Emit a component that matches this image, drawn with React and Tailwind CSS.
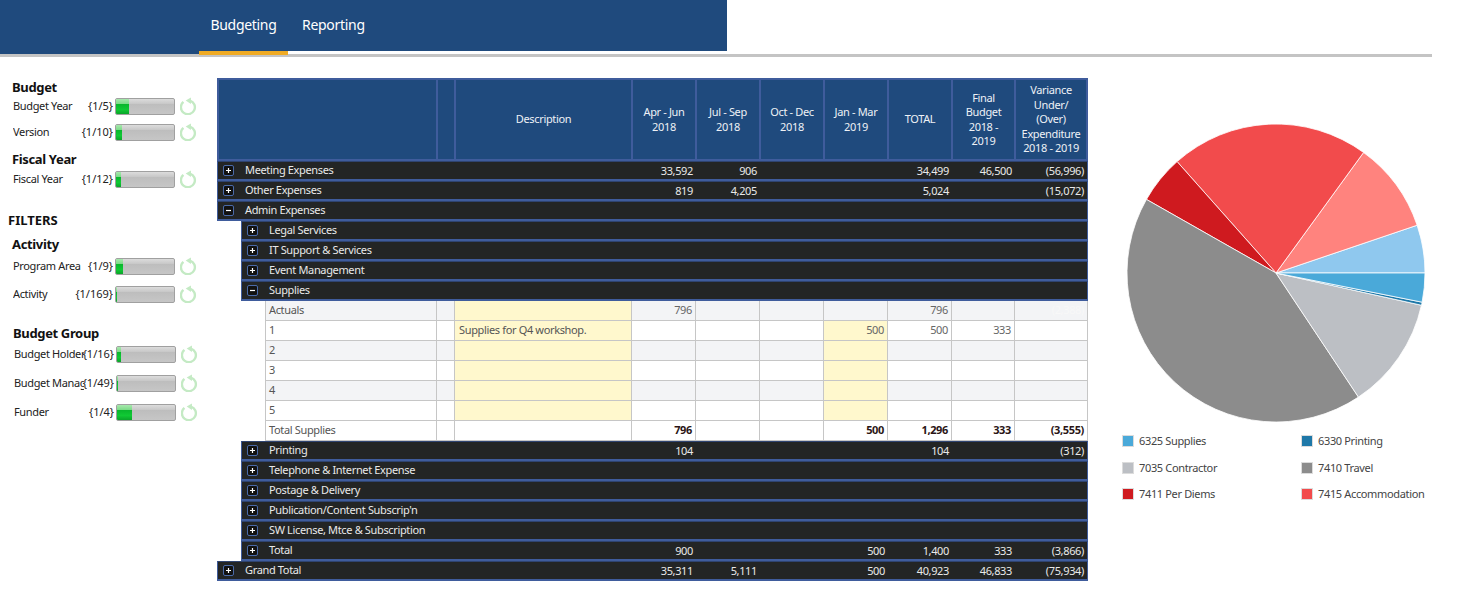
import React from 'react';

const cols = 'grid-cols-[219px_18px_177px_64px_64px_64px_64px_64px_63px_70px]';

function Toggle({ open }) {
  return (
    <span className="w-[11px] h-[11px] shrink-0 rounded-[2px] border border-[#4a6aa8] bg-[#111] flex items-center justify-center">
      <svg width="7" height="7" viewBox="0 0 7 7">
        <path d={open ? 'M1 3.5h5' : 'M1 3.5h5M3.5 1v5'} stroke="#fff" strokeWidth="1.2" fill="none" />
      </svg>
    </span>
  );
}

function Refresh() {
  return (
    <svg width="17" height="18" viewBox="0 0 18 18" className="block shrink-0" fill="none">
      <path d="M3.6 4.6A7.4 7.4 0 1 0 10.5 3.2" stroke="#c4eac4" strokeWidth="2.5" />
      <path d="M6 3.2L11.6 0V6.8Z" fill="#c4eac4" />
    </svg>
  );
}

function Filter({ label, count, fill, indent = 'ml-[13px]', className = '' }) {
  return (
    <div className={`flex items-center h-[19px] ${indent} ${className}`}>
      <span className="w-[70px] shrink-0 overflow-hidden whitespace-nowrap text-[#222]">{label}</span>
      <span className="w-[30px] shrink-0 flex justify-end whitespace-nowrap tracking-normal text-[#222]">{count}</span>
      <div className="relative ml-[2px] w-[60px] h-[17px] shrink-0 rounded-[2px] border border-[#a0a0a0] bg-[linear-gradient(#dcdcdc_0%,#c9c9c9_30%,#bdbdbd_32%,#c6c6c6_100%)] overflow-hidden">
        <div className="h-full bg-[linear-gradient(#a8e8ae_0%,#7fdc8a_30%,#08b52c_32%,#10c934_70%,#0aa52a_100%)]" style={{ width: fill }} />
      </div>
      <span className="ml-[5px] -mt-[2px]"><Refresh /></span>
    </div>
  );
}

function DarkRow({ label, open, vals = [], indent = 0 }) {
  // indent is how far the band starts inside the table
  const first = indent === 1 ? 'ml-[24px]' : '';
  return (
    <div className={`${first} h-5 bg-[#232525] border-l border-r border-b-2 border-t border-[#3f5c9c] border-t-[#2f4470] flex text-[#e9e9e9]`}>
      <div className={`flex items-center gap-[11px] pl-[5px] ${indent === 1 ? 'w-[195px]' : 'w-[219px]'} shrink-0 whitespace-nowrap`}>
        <Toggle open={open} />
        <span>{label}</span>
      </div>
      <div className="w-[195px] shrink-0" />
      {vals.map((v, i) => (
        <div key={i} className={`${i === 6 ? 'w-[72px]' : i === 5 ? 'w-[63px]' : 'w-[64px]'} shrink-0 text-right pr-[3px] leading-[17px] whitespace-nowrap`}>
          {v}
        </div>
      ))}
    </div>
  );
}

const n7 = (q1, q2, q4, total, fin, variance) => [q1, q2, '', q4, total, fin, variance];

function Detail({ label, odd, desc, q1, q4, total, fin, variance, faint, bold, edit = true, q4edit }) {
  const base = odd ? 'bg-[#f3f4f6]' : 'bg-white';
  const line = 'border-r border-b border-[#c6c6c6] h-5 leading-[18px] whitespace-nowrap';
  const num = `${line} ${base} text-right pr-[3px] ${bold ? 'font-bold text-[#2a1515]' : 'text-[#666]'}`;
  return (
    <div className="ml-[48px] flex text-[#555]">
      <div className={`${line} ${base} w-[172px] border-l pl-[3px] shrink-0`}>{label}</div>
      <div className={`${line} ${base} w-[18px] shrink-0`} />
      <div className={`${line} ${edit ? 'bg-[#fff8cd]' : base} w-[177px] pl-[4px] shrink-0`}>{desc}</div>
      <div className={`${num} w-[64px] shrink-0`}>{q1}</div>
      <div className={`${num} w-[64px] shrink-0`} />
      <div className={`${num} w-[64px] shrink-0`} />
      <div className={`${num} ${q4edit ? '!bg-[#fff8cd]' : ''} w-[64px] shrink-0`}>{q4}</div>
      <div className={`${num} w-[64px] shrink-0`}>{total}</div>
      <div className={`${num} w-[63px] shrink-0`}>{fin}</div>
      <div className={`${num} ${faint ? '!text-[#f8f8f8]' : ''} w-[73px] shrink-0`}>{variance}</div>
    </div>
  );
}

function Head({ children }) {
  return (
    <div className="border-r-2 border-[#3f5c9c] last:border-r-0 flex items-center justify-center text-center leading-[14.5px] text-[#eef1f6] px-[5px]">
      {children}
    </div>
  );
}

const slices = [
  { from: 0, to: 18.7, color: '#8fc8ee' },
  { from: 18.7, to: 54, color: '#ff837e' },
  { from: 54, to: 131.6, color: '#f24b4c' },
  { from: 131.6, to: 150.4, color: '#cf1a1f' },
  { from: 150.4, to: 303.6, color: '#8c8c8c' },
  { from: 303.6, to: 347.5, color: '#bcbfc4' },
  { from: 347.5, to: 348.7, color: '#1e78a8' },
  { from: 348.7, to: 360, color: '#4aa9d9' },
];

function slicePath(from, to) {
  const r = 149;
  const rad = (a) => (a * Math.PI) / 180;
  const x1 = 150 + r * Math.cos(rad(from));
  const y1 = 150 - r * Math.sin(rad(from));
  const x2 = 150 + r * Math.cos(rad(to));
  const y2 = 150 - r * Math.sin(rad(to));
  return `M150 150L${x1} ${y1}A${r} ${r} 0 ${to - from > 180 ? 1 : 0} 0 ${x2} ${y2}Z`;
}

const legend = [
  ['#4aa9d9', '6325 Supplies'],
  ['#1e78a8', '6330 Printing'],
  ['#bcbfc4', '7035 Contractor'],
  ['#8c8c8c', '7410 Travel'],
  ['#cf1a1f', '7411 Per Diems'],
  ['#f24b4c', '7415 Accommodation'],
];

export default function App() {
  return (
    <div className="w-[1457px] h-[597px] bg-white overflow-hidden text-[11px] tracking-[-0.35px] font-['Noto_Sans',sans-serif]">
      <header className="w-[1432px] h-[57px] border-b-[3px] border-[#c4c4c4] flex">
        <div className="w-[199px] h-[54px] bg-[#1f4a7d]" />
        <div className="w-[528px]">
          <nav className="h-[51px] bg-[#1f4a7d] flex text-[14px] tracking-[-0.3px] text-white">
            <a className="w-[89px] text-center leading-[49px]">Budgeting</a>
            <a className="ml-[14px] leading-[49px]">Reporting</a>
          </nav>
          <div className="w-[89px] h-[4px] bg-[#f0ab24]" />
        </div>
      </header>

      <div className="flex">
        <aside className="w-[217px] shrink-0 pt-[21px]">
          <h3 className="ml-[12px] text-[13px] font-bold leading-[18px] text-[#111]">Budget</h3>
          <Filter label="Budget Year" count="{1/5}" fill={13} className="mt-[1px]" />
          <Filter label="Version" count="{1/10}" fill={6} className="mt-[7px]" />
          <h3 className="ml-[12px] mt-[8px] text-[13px] font-bold leading-[18px] text-[#111]">Fiscal Year</h3>
          <Filter label="Fiscal Year" count="{1/12}" fill={5} className="mt-[2px]" />
          <h2 className="ml-[8px] mt-[22px] text-[13px] tracking-normal font-bold leading-[18px] text-[#111]">FILTERS</h2>
          <h3 className="ml-[12px] mt-[6px] text-[13px] font-bold leading-[18px] text-[#111]">Activity</h3>
          <Filter label="Program Area" count="{1/9}" fill={7} className="mt-[4px]" />
          <Filter label="Activity" count="{1/169}" fill={1} className="mt-[9px]" />
          <h3 className="ml-[13px] mt-[20px] text-[13px] font-bold leading-[18px] text-[#111]">Budget Group</h3>
          <Filter label="Budget Holder" count="{1/16}" fill={4} indent="ml-[14px]" className="mt-[3px]" />
          <Filter label="Budget Manager" count="{1/49}" fill={1} indent="ml-[14px]" className="mt-[10px]" />
          <Filter label="Funder" count="{1/4}" fill={15} indent="ml-[14px]" className="mt-[10px]" />
        </aside>

        <main className="w-[871px] shrink-0 mt-[21px]">
          <div className={`grid ${cols} h-[83px] bg-[#1f4a7d] border-2 border-[#3f5c9c]`}>
            <Head />
            <Head />
            <Head>Description</Head>
            <Head>Apr - Jun 2018</Head>
            <Head>Jul - Sep 2018</Head>
            <Head>Oct - Dec 2018</Head>
            <Head>Jan - Mar 2019</Head>
            <Head>TOTAL</Head>
            <Head>Final Budget 2018 - 2019</Head>
            <Head>Variance Under/ (Over) Expenditure 2018 - 2019</Head>
          </div>
          <DarkRow label="Meeting Expenses" vals={n7('33,592', '906', '', '34,499', '46,500', '(56,996)')} />
          <DarkRow label="Other Expenses" vals={n7('819', '4,205', '', '5,024', '', '(15,072)')} />
          <DarkRow label="Admin Expenses" open />
          <DarkRow label="Legal Services" indent={1} />
          <DarkRow label="IT Support & Services" indent={1} />
          <DarkRow label="Event Management" indent={1} />
          <DarkRow label="Supplies" indent={1} open />
          <Detail label="Actuals" odd q1="796" total="796" variance="(2,388)" faint />
          <Detail label="1" desc="Supplies for Q4 workshop." q4="500" total="500" fin="333" q4edit />
          <Detail label="2" odd q4edit />
          <Detail label="3" q4edit />
          <Detail label="4" odd q4edit />
          <Detail label="5" q4edit />
          <Detail label="Total Supplies" edit={false} bold q1="796" q4="500" total="1,296" fin="333" variance="(3,555)" />
          <DarkRow label="Printing" indent={1} vals={n7('104', '', '', '104', '', '(312)')} />
          <DarkRow label="Telephone & Internet Expense" indent={1} />
          <DarkRow label="Postage & Delivery" indent={1} />
          <DarkRow label="Publication/Content Subscrip'n" indent={1} />
          <DarkRow label="SW License, Mtce & Subscription" indent={1} />
          <DarkRow label="Total" indent={1} vals={n7('900', '', '500', '1,400', '333', '(3,866)')} />
          <DarkRow label="Grand Total" vals={n7('35,311', '5,111', '500', '40,923', '46,833', '(75,934)')} />
        </main>

        <section className="ml-[38px] w-[330px] shrink-0 pt-[66px]">
          <svg width="300" height="300" viewBox="0 0 300 300" className="block">
            {slices.map((s) => (
              <path key={s.color} d={slicePath(s.from, s.to)} fill={s.color} stroke="#fff" strokeWidth="0.8" />
            ))}
          </svg>
          <div className="grid grid-cols-[179px_1fr] mt-[5px] ml-[-4px] text-[#444]">
            {legend.map(([color, text]) => (
              <div key={text} className="h-[26.5px] flex items-center gap-[5px] whitespace-nowrap">
                <span className="w-[12px] h-[12px] border border-[#dcdcdc]" style={{ background: color }} />
                <span>{text}</span>
              </div>
            ))}
          </div>
        </section>
      </div>
    </div>
  );
}
